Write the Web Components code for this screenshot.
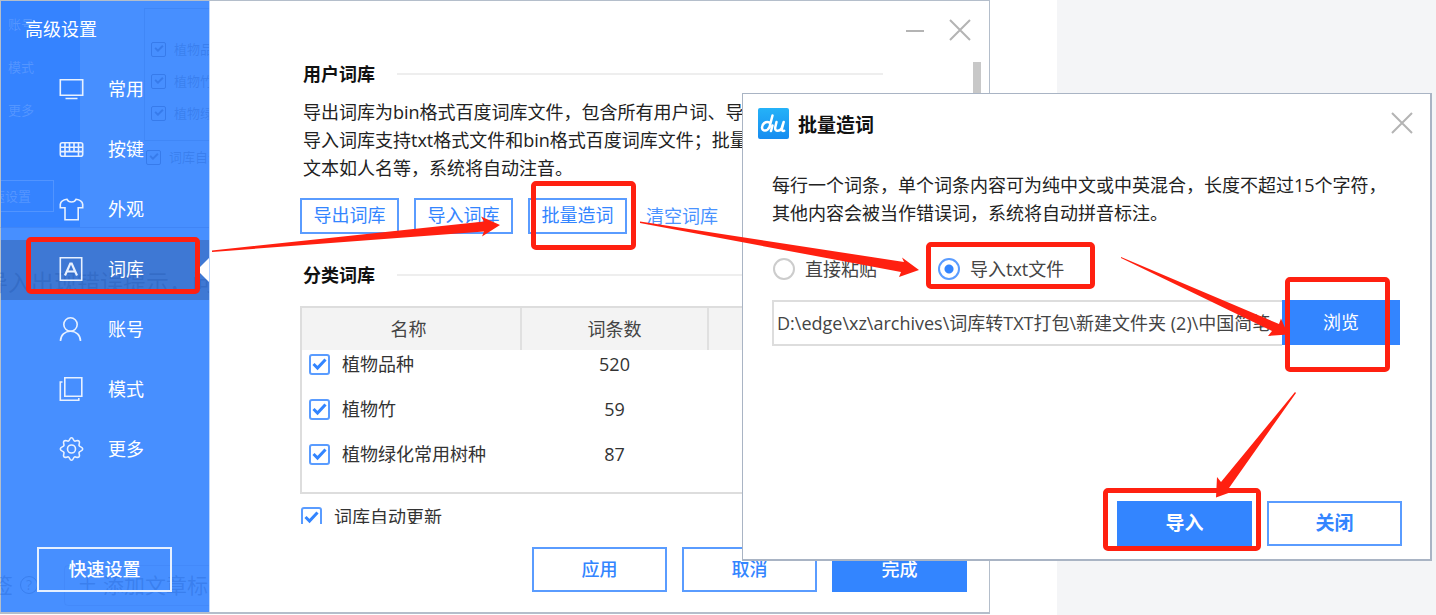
<!DOCTYPE html>
<html lang="zh-CN">
<head>
<meta charset="utf-8">
<title>高级设置</title>
<style>
  html, body { margin: 0; min-height: 100%; }
  body {
    font-family: "Open Sans", "Noto Sans CJK SC", sans-serif;
    font-size: 18px;
    line-height: 28px;
    color: #222;
  }
</style>
</head>
<body>
<app-desktop></app-desktop>

<script>
const BASE = `
  *, *::before { box-sizing: border-box; }
  button, input { font: inherit; color: inherit; margin: 0; }
`;
function define(name, css, html) {
  customElements.define(name, class extends HTMLElement {
    constructor() {
      super();
      this.attachShadow({ mode: 'open' }).innerHTML = `<style>${BASE}${css}</style>${html(this)}`;
    }
  });
}

/* red hand-drawn style frame around whatever is slotted in */
define('mark-frame', `
  :host { display: block; position: relative; }
  .ring {
    position: absolute; inset: var(--ring, -5px); z-index: 3;
    border: 5px solid #ff2010; border-radius: 5px; pointer-events: none;
  }
`, () => `<slot></slot><div class="ring"></div>`);

define('ui-button', `
  :host { display: block; width: 135px; height: 45px; }
  button {
    width: 100%; height: 100%; padding: 0 0 2px; background: #fff; color: #3385ff;
    border: 2px solid #5a9cff; font-weight: 500; display: block; white-space: nowrap;
  }
  :host([kind="primary"]) button { background: #3385ff; border-color: #3385ff; color: #fff; }
  :host([kind="ghost"]) button { background: transparent; border-color: #e6f0ff; color: #fff; }
  :host([kind="small"]) { width: 99px; height: 36px; }
  :host([kind="small"]) button { font-weight: 400; }
  :host([strong]) button { font-weight: 700; font-size: 19px; }
  :host([plain]) button { font-weight: 400; }
`, () => `<button type="button"><slot></slot></button>`);

define('ui-check', `
  :host { display: block; }
  label { display: flex; align-items: center; gap: 12px; white-space: nowrap; }
  input {
    appearance: none; width: 21px; height: 21px; flex: none;
    border: 2px solid #5a9cff; border-radius: 3px;
    background: #fff url("data:image/svg+xml,%3Csvg xmlns='http://www.w3.org/2000/svg' viewBox='0 0 17 17'%3E%3Cpath d='M2.5 8l4 4 8-8.500' fill='none' stroke='%233385ff' stroke-width='3'/%3E%3C/svg%3E") center / 17px 17px no-repeat;
  }
`, () => `<label><input type="checkbox" checked><span><slot></slot></span></label>`);

define('ui-radio', `
  :host { display: block; color: #444; }
  label { display: flex; align-items: center; gap: 10px; white-space: nowrap; }
  input {
    appearance: none; width: 22px; height: 22px; flex: none;
    border: 2px solid #ccc; border-radius: 50%; background: #fff;
  }
  input:checked {
    border-color: #5a9cff;
    background: radial-gradient(circle, #3385ff 4px, #fff 5px);
  }
`, el => `<label><input type="radio" name="source" ${el.hasAttribute('checked') ? 'checked' : ''}><span><slot></slot></span></label>`);

define('ui-section-title', `
  :host { display: flex; align-items: center; gap: 22px; color: #111; }
  h2 { margin: 0; font-size: 18px; line-height: 28px; font-weight: 700; white-space: nowrap; }
  i { flex: 1; height: 2px; background: #eee; }
`, () => `<h2><slot></slot></h2><i></i>`);

const ICONS = {
  monitor: '<path d="M.8 2.800h22.400v15.400H.8zM6 21.500h12"/>',
  keyboard: '<rect x=".8" y="5.800" width="22.400" height="13.400" rx="2"/><path d="M1 10.200h22M1 14.600h22M5.500 6v13M10 6v8.500M14.500 6v8.500M19 6v13"/>',
  shirt: '<path d="M7.500 2.300c1.500 3.600 7.500 3.600 9 0 3.500.5 6.300 2 6.700 5v3.400h-4.500v12H5.500v-12H.8V7.300c.4-3 3.200-4.500 6.700-5z"/>',
  letter: '<path d="M.8.8h21.400v22.400H.8z"/><path stroke-width="2.200" d="M5.500 18.500l5.300-12h1.400l5.300 12M7.500 14.500h8"/>',
  user: '<circle cx="11" cy="7.500" r="6.700"/><path d="M1 24c0-6 4.500-9.800 10-9.800S21 18 21 24"/>',
  copy: '<path d="M5.300.8h17v18.400h-17zM3 5H.8v18.200h18.500V21"/>',
  gear: '<circle cx="12" cy="12" r="4"/><path d="M12 .8c2 0 1.600 2.600 3 3.200s3-1.400 4.500.1-.5 3.100.1 4.500 3.600 1.400 3.600 3.400-3 2-3.600 3.400 1.400 3-.1 4.500-3.100-.5-4.500.1-1 3.200-3 3.200-1.600-2.600-3-3.200-3 1.400-4.500-.1.500-3.100-.1-4.500S.8 14 .8 12s3-2 3.600-3.400-1.400-3 .1-4.500 3.100.5 4.500-.1 1-3.200 3-3.200z"/>'
};
define('nav-item', `
  :host { display: block; }
  a {
    height: 60px; display: flex; align-items: center; gap: 24px; padding: 0 0 2px 58px;
    color: #fff; text-decoration: none; position: relative;
  }
  svg { width: 25px; height: 25px; fill: none; stroke: #e8f1ff; stroke-width: 1.600; flex: none; }
  :host([current]) a { background: rgba(40, 60, 100, .28); }
  :host([current]) a::before {
    content: ""; position: absolute; right: 0; top: 18px;
    border: 12px solid transparent; border-right-color: #fff; border-left-width: 0;
  }
  mark-frame { position: absolute; inset: 2px 14px 11px 30px; }
`, el => `<a href="#" ${el.hasAttribute('current') ? 'aria-current="page"' : ''}>
  <svg viewBox="0 0 24 25" aria-hidden="true">${ICONS[el.getAttribute('icon')]}</svg><span><slot></slot></span>
  ${el.hasAttribute('current') ? '<mark-frame></mark-frame>' : ''}</a>`);

/* page content that shows faintly through the translucent sidebar */
define('sidebar-backdrop', `
  :host { position: absolute; inset: -1px 0 0 -1px; overflow: hidden; font-size: 13px; line-height: 20px; color: rgba(20, 80, 190, .26); white-space: nowrap; }
  .nav { position: absolute; left: 1px; top: 1px; width: 79px; height: 226px; background: #3583ff; color: rgba(255, 255, 255, .16); overflow: hidden; }
  .line { position: absolute; left: 0; right: 0; top: 227px; border-top: 1px solid rgba(20, 80, 190, .14); }
  span { position: absolute; }
  .box { position: absolute; left: -40px; top: 179px; width: 93px; height: 32px; border: 1px solid rgba(255, 255, 255, .14); }
  .frame { position: absolute; left: 144px; top: 8px; width: 80px; height: 133px; border: 1px solid rgba(20, 80, 190, .12); }
  .tick { width: 15px; height: 15px; border: 1px solid rgba(20, 80, 190, .3); border-radius: 2px; }
  .tick::before { content: ""; position: absolute; left: 3px; top: 2px; width: 8px; height: 5px; border: solid rgba(20, 80, 190, .3); border-width: 0 0 2px 2px; transform: rotate(-45deg); }
  .large { font-size: 23px; line-height: 32px; }
  .tag { font-size: 21px; line-height: 32px; }
  .q { width: 18px; height: 18px; border: 1px solid; border-radius: 50%; font-size: 14px; line-height: 16px; text-align: center; }
  .pill { position: absolute; left: 64px; top: 565px; width: 200px; height: 41px; border: 1px solid rgba(20, 80, 190, .08); border-radius: 4px; }
`, () => `
  <div class="nav"><span style="left:7px;top:13px">账号</span><span style="left:7px;top:56px">模式</span><span style="left:7px;top:99px">更多</span>
  <div class="box"></div><span style="left:-22px;top:185px">快速设置</span></div>
  <div class="line"></div><div class="frame"></div>
  <span class="tick" style="left:151px;top:42px"></span><span style="left:174px;top:39px">植物品种</span>
  <span class="tick" style="left:151px;top:74px"></span><span style="left:174px;top:71px">植物竹</span>
  <span class="tick" style="left:151px;top:106px"></span><span style="left:174px;top:103px">植物绿化</span>
  <span class="tick" style="left:146px;top:150px"></span><span style="left:169px;top:147px">词库自动</span>
  <span class="large" style="left:-15px;top:266px">导入出现错误提示，问</span>
  <div class="pill"></div>
  <span class="tag" style="left:-8px;top:569px">签</span><span class="q" style="left:20px;top:576px">?</span>
  <span class="tag" style="left:77px;top:567px">＋</span><span class="tag" style="left:103px;top:569px">添加文章标签</span>`);

define('app-sidebar', `
  :host { display: flex; flex-direction: column; position: relative; width: 209px; flex: none; background: #478fff; border-right: 1px solid #b9d5ff; color: #fff; }
  header, nav, footer { position: relative; }
  header { height: 59px; padding: 14px 24px; }
  h1 { margin: 0; font-size: 18px; line-height: 28px; font-weight: 400; }
  footer { margin-top: auto; padding: 0 36px 20px; }
`, () => `
  <sidebar-backdrop aria-hidden="true"></sidebar-backdrop>
  <header><h1>高级设置</h1></header>
  <nav>
    <nav-item icon="monitor">常用</nav-item>
    <nav-item icon="keyboard">按键</nav-item>
    <nav-item icon="shirt">外观</nav-item>
    <nav-item icon="letter" current>词库</nav-item>
    <nav-item icon="user">账号</nav-item>
    <nav-item icon="copy">模式</nav-item>
    <nav-item icon="gear">更多</nav-item>
  </nav>
  <footer><ui-button kind="ghost">快速设置</ui-button></footer>`);

define('window-control', `
  :host { display: block; width: 22px; height: 22px; }
  button { display: block; width: 100%; height: 100%; padding: 0; border: 0; background: none; }
  svg { display: block; width: 100%; height: 100%; stroke: #b4b4b4; stroke-width: 2; fill: none; }
`, el => {
  const close = el.getAttribute('type') === 'close';
  return `<button type="button" aria-label="${close ? '关闭' : '最小化'}"><svg viewBox="0 0 22 22"><path d="${close ? 'M1 1l20 20M21 1L1 21' : 'M2 12h18'}"/></svg></button>`;
});

define('lexicon-table', `
  :host { display: block; border: 2px solid #ddd; padding-bottom: 7px; }
  table { width: 100%; border-collapse: collapse; table-layout: fixed; }
  th { height: 42px; padding: 0; background: #f3f3f3; font-weight: 400; color: #444; }
  th + th { border-left: 2px solid #e0e0e0; }
  th:nth-child(1) { width: 219px; padding-right: 5px; }
  th:nth-child(2) { width: 187px; }
  td { height: 45px; padding: 0; vertical-align: top; text-align: center; color: #333; }
  td:first-child { padding-left: 7px; }
`, () => `<table><thead><tr><th>名称</th><th>词条数</th><th></th></tr></thead><tbody>
  <tr><td><ui-check>植物品种</ui-check></td><td>520</td><td></td></tr>
  <tr><td><ui-check>植物竹</ui-check></td><td>59</td><td></td></tr>
  <tr><td><ui-check>植物绿化常用树种</ui-check></td><td>87</td><td></td></tr>
  </tbody></table>`);

define('settings-window', `
  :host { display: flex; background: #fff; border: 1px solid #b4becb; border-bottom-width: 2px; }
  main { flex: 1; min-width: 0; display: flex; flex-direction: column; }
  .title { display: flex; justify-content: flex-end; gap: 23px; height: 59px; padding: 18px 18px 0; flex: none; }
  .view { display: flex; flex: 1 1 0; min-height: 460px; overflow: hidden; padding: 0 8px 0 90px; }
  .page { flex: 1; min-width: 0; padding-right: 90px; }
  .bar { width: 8px; height: 200px; margin-top: 2px; background: #c8c8c8; }
  ui-section-title { margin: 0 0 0 3px; }
  p { margin: 10px 0 16px 3px; white-space: nowrap; overflow: hidden; }
  .actions { display: flex; gap: 15px; margin-bottom: 27px; align-items: center; }
  .actions a { color: #4a93ff; text-decoration: none; margin-left: 4px; white-space: nowrap; }
  mark-frame { --ring: -17px -9px -16px 3px; }
  lexicon-table { margin: 17px 0 9px; }
  .auto { margin-left: 1px; color: #333; }
  .foot { display: flex; justify-content: flex-end; gap: 15px; padding: 23px 22px 20px 0; flex: none; }
`, () => `
  <app-sidebar></app-sidebar>
  <main>
    <div class="title"><window-control type="min"></window-control><window-control type="close"></window-control></div>
    <div class="view">
      <div class="page">
        <ui-section-title>用户词库</ui-section-title>
        <p>导出词库为bin格式百度词库文件，包含所有用户词、导<br>导入词库支持txt格式文件和bin格式百度词库文件；批量<br>文本如人名等，系统将自动注音。</p>
        <div class="actions">
          <ui-button kind="small">导出词库</ui-button>
          <ui-button kind="small">导入词库</ui-button>
          <mark-frame><ui-button kind="small">批量造词</ui-button></mark-frame>
          <a href="#">清空词库</a>
        </div>
        <ui-section-title>分类词库</ui-section-title>
        <lexicon-table></lexicon-table>
        <ui-check class="auto">词库自动更新</ui-check>
      </div>
      <div class="bar"></div>
    </div>
    <div class="foot"><ui-button>应用</ui-button><ui-button>取消</ui-button><ui-button kind="primary">完成</ui-button></div>
  </main>`);

define('brand-icon', `
  :host { display: block; width: 31px; height: 31px; }
  svg { display: block; width: 100%; height: 100%; }
`, () => `<svg viewBox="0 0 31 31" aria-hidden="true"><defs><linearGradient id="g" x2="0" y2="1"><stop stop-color="#25b2f8"/><stop offset="1" stop-color="#168cf0"/></linearGradient></defs>
  <rect width="31" height="31" rx="2" fill="url(#g)"/>
  <g fill="none" stroke="#fff" stroke-width="2.500" stroke-linecap="round" stroke-linejoin="round">
  <path d="M11.500 14.500c-4-1.500-7.500 1.500-7.500 5 0 4.200 5.500 4 7.500-.5L14.500 7.500M14.500 17.500l-1.500 5.500"/>
  <path d="M18.500 14l-1.300 5.500c-.8 4.500 5 4 6.500.5l2-6-1.700 6.500c-.5 2 .5 3 2.200 2.200"/></g></svg>`);

define('batch-dialog', `
  :host { display: flex; flex-direction: column; background: #fff; border: 1px solid #a9b4c4; border-width: 1px 2px 2px 1px; color: #222; }
  header { display: flex; align-items: flex-start; padding: 14px 17px 0 15px; height: 77px; }
  h2 { flex: 1; margin: 3px 0 0 9px; font-size: 19px; line-height: 28px; font-weight: 700; color: #111; }
  window-control { margin-top: 4px; }
  .body { padding: 0 30px 0 29px; }
  p { margin: 0; white-space: nowrap; }
  .choice { display: flex; gap: 61px; margin: 28px 0 17px 1px; }
  .choice mark-frame { --ring: -13px -31px -6px -12px; }
  .file { display: flex; }
  .file input { flex: 1; min-width: 0; height: 46px; padding: 0 3px 3px; border: 2px solid #ddd; border-right: 0; background: #fff; color: #444; border-radius: 0; }
  .file mark-frame { width: 118px; --ring: -23px 10px -26px 3px; }
  .file ui-button { width: 118px; }
  footer { display: flex; justify-content: flex-end; gap: 15px; margin-top: auto; padding: 0 28px 13px; }
  footer mark-frame { --ring: -13px -9px -5px -14px; }
`, () => `
  <header><brand-icon></brand-icon><h2>批量造词</h2><window-control type="close"></window-control></header>
  <div class="body">
    <p>每行一个词条，单个词条内容可为纯中文或中英混合，长度不超过15个字符，<br>其他内容会被当作错误词，系统将自动拼音标注。</p>
    <div class="choice"><ui-radio>直接粘贴</ui-radio><mark-frame><ui-radio checked>导入txt文件</ui-radio></mark-frame></div>
    <div class="file"><input type="text" aria-label="文件路径" value="D:\\edge\\xz\\archives\\词库转TXT打包\\新建文件夹 (2)\\中国简笔"><mark-frame><ui-button kind="primary" plain>浏览</ui-button></mark-frame></div>
  </div>
  <footer><mark-frame><ui-button kind="primary" strong>导入</ui-button></mark-frame><ui-button strong>关闭</ui-button></footer>`);

/* arrows that lead from one step to the next */
define('step-arrows', `
  :host { position: absolute; left: 0; top: 0; pointer-events: none; z-index: 5; }
  svg { display: block; fill: #ff2010; }
`, () => `<svg width="1436" height="615" viewBox="0 0 1436 615" aria-hidden="true">
  <path d="M212 250.500L484 221.500 481 216.500 500 225 482 236.500 484 231.500 212 252z"/>
  <path d="M640 221.500L904 262 902 257.500 919 270 899 277 901 272 640 223z"/>
  <path d="M1121 257L1279 324 1281 318.500 1288 334.500 1268 336 1272 331 1121 258z"/>
  <path d="M1295 392L1296 393 1229 488 1234 491 1216 497.500 1217 477 1221 482z"/>
</svg>`);

define('app-desktop', `
  :host { display: block; position: relative; min-height: 100vh; overflow: hidden; background: linear-gradient(90deg, #fff 1057px, #f4f5f7 1057px); }
  settings-window { width: 990px; min-height: calc(100vh - 1px); }
  batch-dialog { position: absolute; left: 742px; right: 4px; top: 93px; min-height: 468px; }
`, () => `<settings-window></settings-window><batch-dialog role="dialog"></batch-dialog><step-arrows></step-arrows>`);
</script>
</body>
</html>
